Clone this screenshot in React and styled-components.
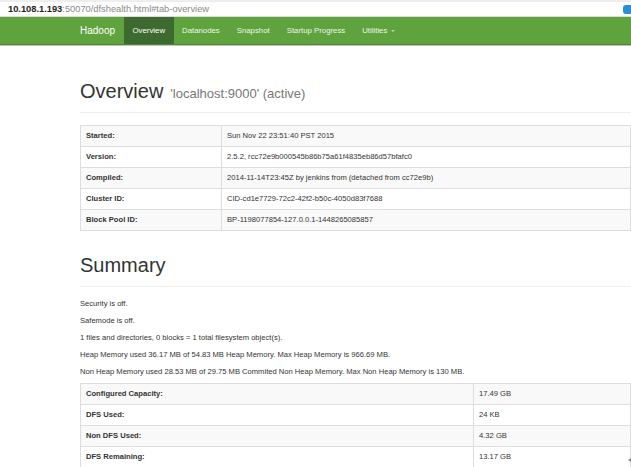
import React from "react";
import styled, { createGlobalStyle } from "styled-components";

const GlobalStyle = createGlobalStyle`
  html, body {
    margin: 0;
    padding: 0;
    background: #fff;
    overflow: hidden;
  }
  body {
    font-family: "Liberation Sans", Arial, Helvetica, sans-serif;
    color: #333;
  }
`;

const Window = styled.div`
  position: relative;
  width: 631px;
  height: 467px;
  overflow: hidden;
  background: #fff;
`;

const AddressBar = styled.div`
  display: flex;
  align-items: center;
  height: 17px;
  box-sizing: border-box;
  border-top: 2px solid #eeeeee;
  border-bottom: 1px solid #dcdcdc;
  padding-left: 8px;
  font-size: 9.3px;
  overflow: hidden;
`;

const Host = styled.span`
  color: #1e1e1e;
  font-weight: bold;
`;

const UrlPath = styled.span`
  color: #8a8a8a;
`;

const BrowserIcon = styled.span`
  margin-left: auto;
  margin-right: -4px;
  width: 12px;
  height: 9px;
  border-radius: 3px;
  background: #2b8fd8;
`;

const Navbar = styled.nav`
  display: flex;
  align-items: stretch;
  height: 28px;
  box-sizing: border-box;
  padding-left: 80px;
  background: #5fa33e;
  border-bottom: 1px solid #4a8a2f;
  box-shadow: 0 1px 0 #c4c4c4;
`;

const Brand = styled.div`
  display: flex;
  align-items: center;
  margin-right: 9px;
  font-size: 10px;
  color: #ffffff;
`;

const NavItem = styled.div`
  display: flex;
  align-items: center;
  gap: 4px;
  padding: 0 8.5px;
  font-size: 7.8px;
  color: ${(p) => (p.$active ? "#ffffff" : "#eef6ea")};
  background: ${(p) => (p.$active ? "#3d6a2e" : "transparent")};
`;

const Caret = styled.span`
  width: 0;
  height: 0;
  border-left: 2.5px solid transparent;
  border-right: 2.5px solid transparent;
  border-top: 2.5px solid #b9d9a8;
`;

const Container = styled.main`
  padding-left: 80px;
`;

const PageHeader = styled.div`
  margin: ${(p) => p.$mt}px 0 ${(p) => p.$mb}px;
  padding-bottom: 10px;
  border-bottom: 1px solid #eeeeee;
`;

const Title = styled.h1`
  margin: 0;
  font-size: 20px;
  line-height: 22px;
  font-weight: normal;
  color: #333;
`;

const Subtitle = styled.small`
  margin-left: 7px;
  font-size: 13px;
  line-height: 1;
  color: #777;
`;

const InfoTable = styled.table`
  width: 100%;
  border-collapse: collapse;
  font-size: 7.6px;
  color: #333;

  tr:nth-child(odd) td {
    background: #f9f9f9;
  }

  td {
    border: 1px solid #dddddd;
    padding: 0 5px;
    line-height: 20px;
    white-space: nowrap;
  }
`;

const LabelCell = styled.td`
  width: ${(p) => p.$w}px;
  box-sizing: border-box;
  font-weight: bold;
`;

const Para = styled.p`
  margin: 0 0 5px;
  font-size: 7.6px;
  line-height: 12px;
  color: #333;
  white-space: nowrap;
`;

const ScrollArrow = styled.span`
  position: absolute;
  right: 0;
  bottom: 5px;
  width: 0;
  height: 0;
  border-top: 2.5px solid transparent;
  border-bottom: 2.5px solid transparent;
  border-right: 3px solid #8c8c8c;
`;

const overview = [
  ["Started:", "Sun Nov 22 23:51:40 PST 2015"],
  ["Version:", "2.5.2, rcc72e9b000545b86b75a61f4835eb86d57bfafc0"],
  ["Compiled:", "2014-11-14T23:45Z by jenkins from (detached from cc72e9b)"],
  ["Cluster ID:", "CID-cd1e7729-72c2-42f2-b50c-4050d83f7688"],
  ["Block Pool ID:", "BP-1198077854-127.0.0.1-1448265085857"],
];

const summaryLines = [
  "Security is off.",
  "Safemode is off.",
  "1 files and directories, 0 blocks = 1 total filesystem object(s).",
  "Heap Memory used 36.17 MB of 54.83 MB Heap Memory. Max Heap Memory is 966.69 MB.",
  "Non Heap Memory used 28.53 MB of 29.75 MB Commited Non Heap Memory. Max Non Heap Memory is 130 MB.",
];

const capacity = [
  ["Configured Capacity:", "17.49 GB"],
  ["DFS Used:", "24 KB"],
  ["Non DFS Used:", "4.32 GB"],
  ["DFS Remaining:", "13.17 GB"],
];

const navItems = ["Overview", "Datanodes", "Snapshot", "Startup Progress"];

function KeyValueTable({ rows, labelWidth }) {
  return (
    <InfoTable>
      <tbody>
        {rows.map(([k, v]) => (
          <tr key={k}>
            <LabelCell $w={labelWidth}>{k}</LabelCell>
            <td>{v}</td>
          </tr>
        ))}
      </tbody>
    </InfoTable>
  );
}

export default function App() {
  return (
    <Window>
      <GlobalStyle />
      <AddressBar>
        <Host>10.108.1.193</Host>
        <UrlPath>:50070/dfshealth.html#tab-overview</UrlPath>
        <BrowserIcon />
      </AddressBar>
      <Navbar>
        <Brand>Hadoop</Brand>
        {navItems.map((n, i) => (
          <NavItem key={n} $active={i === 0}>
            {n}
          </NavItem>
        ))}
        <NavItem>
          Utilities
          <Caret />
        </NavItem>
      </Navbar>
      <Container>
        <PageHeader $mt={35} $mb={12}>
          <Title>
            Overview<Subtitle>'localhost:9000' (active)</Subtitle>
          </Title>
        </PageHeader>
        <KeyValueTable rows={overview} labelWidth={141} />
        <PageHeader $mt={23} $mb={11}>
          <Title>Summary</Title>
        </PageHeader>
        {summaryLines.map((l) => (
          <Para key={l}>{l}</Para>
        ))}
        <KeyValueTable rows={capacity} labelWidth={393} />
      </Container>
      <ScrollArrow />
    </Window>
  );
}
